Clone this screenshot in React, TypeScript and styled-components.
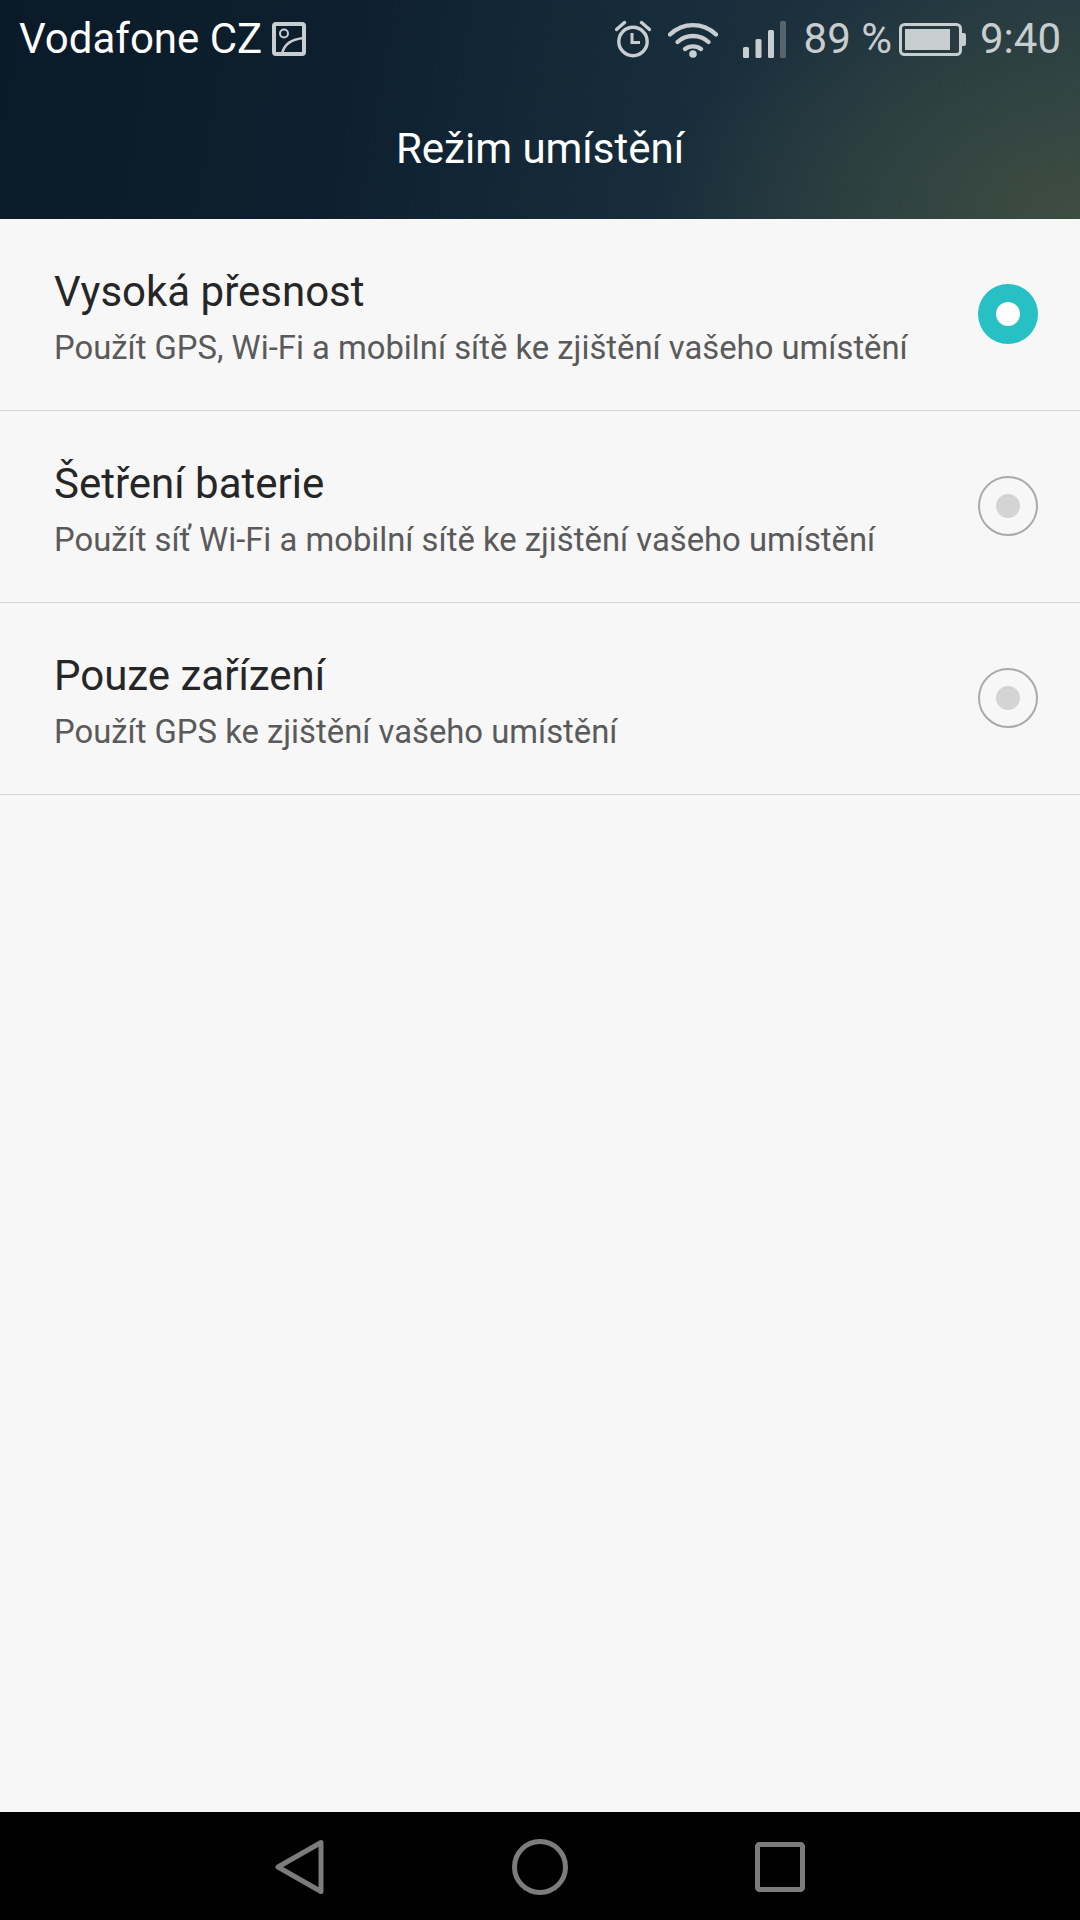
import styled, { createGlobalStyle } from 'styled-components';

const GlobalStyle = createGlobalStyle`
  html, body {
    margin: 0;
    padding: 0;
    background: #f7f7f7;
    font-family: Roboto, "Noto Sans", sans-serif;
  }
`;

const options = [
  { title: 'Vysoká přesnost', text: 'Použít GPS, Wi-Fi a mobilní sítě ke zjištění vašeho umístění', selected: true },
  { title: 'Šetření baterie', text: 'Použít síť Wi-Fi a mobilní sítě ke zjištění vašeho umístění', selected: false },
  { title: 'Pouze zařízení', text: 'Použít GPS ke zjištění vašeho umístění', selected: false },
];

const App = () => {
  return (
    <Screen>
      <GlobalStyle />
      <Header>
        <StatusBar>
          <Carrier>Vodafone CZ</Carrier>
          <PhotoIcon viewBox="0 0 34 34">
            <rect x="2" y="2" width="30" height="30" rx="2" fill="none" stroke="#c8cdd0" strokeWidth="4" />
            <circle cx="12" cy="11.5" r="4" fill="none" stroke="#c8cdd0" strokeWidth="2" />
            <path d="M10 32 C12 22 20 17 32 16" fill="none" stroke="#c8cdd0" strokeWidth="2.6" />
          </PhotoIcon>
          <StatusRight>
            <AlarmIcon viewBox="0 0 36 38">
              <circle cx="18" cy="21.5" r="14.2" fill="none" stroke="#c8cdd0" strokeWidth="3.4" />
              <path d="M17 13v9.5h8" fill="none" stroke="#c8cdd0" strokeWidth="3" />
              <path d="M1.5 9.5 L9.5 2.5 M34.5 9.5 L26.5 2.5" stroke="#c8cdd0" strokeWidth="3.4" strokeLinecap="round" />
            </AlarmIcon>
            <WifiIcon viewBox="0 0 50 37">
              <path d="M2 13.5 C15 1 35 1 48 13.5" fill="none" stroke="#c8cdd0" strokeWidth="4.4" strokeLinecap="round" />
              <path d="M9.5 21 C18 13 32 13 40.5 21" fill="none" stroke="#c8cdd0" strokeWidth="4.4" strokeLinecap="round" />
              <path d="M17 28 C21.5 24.5 28.5 24.5 33 28" fill="none" stroke="#c8cdd0" strokeWidth="4.4" strokeLinecap="round" />
              <circle cx="25" cy="33" r="3.8" fill="#c8cdd0" />
            </WifiIcon>
            <SignalIcon viewBox="0 0 43 37">
              <rect x="0" y="26" width="6" height="11" rx="1.5" fill="#c8cdd0" />
              <rect x="12.5" y="18" width="6" height="19" rx="1.5" fill="#c8cdd0" />
              <rect x="25" y="9" width="6" height="28" rx="1.5" fill="#c8cdd0" />
              <rect x="37" y="0" width="6" height="37" rx="1.5" fill="#56646c" />
            </SignalIcon>
            <Percent>89 %</Percent>
            <BatteryIcon viewBox="0 0 67 33">
              <rect x="1.5" y="1.5" width="60" height="30" rx="4" fill="none" stroke="#c8cdd0" strokeWidth="3" />
              <rect x="6" y="6" width="45" height="21" fill="#c8cdd0" />
              <path d="M63 10h2a2 2 0 0 1 2 2v9a2 2 0 0 1-2 2h-2z" fill="#c8cdd0" />
            </BatteryIcon>
            <Clock>9:40</Clock>
          </StatusRight>
        </StatusBar>
        <Title>Režim umístění</Title>
      </Header>
      <Options>
        {options.map((option) => (
          <Row key={option.title}>
            <RowText>
              <RowTitle>{option.title}</RowTitle>
              <RowDescription>{option.text}</RowDescription>
            </RowText>
            <Radio $selected={option.selected} />
          </Row>
        ))}
      </Options>
      <NavBar>
        <NavIcon viewBox="0 0 50 56" $width={50} $height={56}>
          <path d="M46 3.5 V52.5 L3 28 Z" fill="none" stroke="#7c7c7c" strokeWidth="5" strokeLinejoin="round" />
        </NavIcon>
        <NavIcon viewBox="0 0 56 56" $width={56} $height={56}>
          <circle cx="28" cy="28" r="25.5" fill="none" stroke="#7c7c7c" strokeWidth="5" />
        </NavIcon>
        <NavIcon viewBox="0 0 50 50" $width={50} $height={50}>
          <rect x="2.5" y="2.5" width="45" height="45" rx="2" fill="none" stroke="#7c7c7c" strokeWidth="5" />
        </NavIcon>
      </NavBar>
    </Screen>
  );
};

export default App;

const Screen = styled.div`
  width: 1080px;
  height: 1920px;
  display: flex;
  flex-direction: column;
  background: #f7f7f7;
  overflow: hidden;
`;

const Header = styled.header`
  height: 219px;
  flex-shrink: 0;
  box-sizing: border-box;
  background:
    radial-gradient(ellipse 420px 260px at 100% 100%, rgba(68, 82, 66, 0.8), rgba(68, 82, 66, 0) 100%),
    linear-gradient(100deg, #0b1a28 0%, #0d1f2e 30%, #182d3b 62%, #273c43 100%);
`;

const StatusBar = styled.div`
  height: 78px;
  display: flex;
  align-items: center;
  padding: 0 19px 0 19px;
`;

const Carrier = styled.span`
  color: #fff;
  font-size: 42px;
  line-height: 1;
`;

const PhotoIcon = styled.svg`
  width: 34px;
  height: 34px;
  margin-left: 10px;
`;

const StatusRight = styled.div`
  margin-left: auto;
  display: flex;
  align-items: center;
`;

const AlarmIcon = styled.svg`
  width: 36px;
  height: 38px;
`;

const WifiIcon = styled.svg`
  width: 50px;
  height: 37px;
  margin-left: 17px;
`;

const SignalIcon = styled.svg`
  width: 43px;
  height: 37px;
  margin-left: 25px;
`;

const Percent = styled.span`
  color: #c8cdd0;
  font-size: 42px;
  line-height: 1;
  margin-left: 18px;
`;

const BatteryIcon = styled.svg`
  width: 67px;
  height: 33px;
  margin-left: 7px;
`;

const Clock = styled.span`
  color: #c8cdd0;
  font-size: 42px;
  line-height: 1;
  margin-left: 14px;
`;

const Title = styled.h1`
  margin: 0;
  height: 141px;
  padding-top: 43px;
  box-sizing: border-box;
  text-align: center;
  color: #fff;
  font-size: 42px;
  font-weight: 400;
  line-height: 56px;
`;

const Options = styled.main`
  flex: 1;
`;

const Row = styled.div`
  height: 192px;
  box-sizing: border-box;
  display: flex;
  align-items: center;
  justify-content: space-between;
  padding: 0 42px 0 54px;
  border-bottom: 1px solid #d6d6d6;
`;

const RowText = styled.div`
  display: flex;
  flex-direction: column;
  margin-top: 6px;
`;

const RowTitle = styled.div`
  color: #262626;
  font-size: 42px;
  line-height: 54px;
  margin-bottom: 7px;
`;

const RowDescription = styled.div`
  color: #5a5a5a;
  font-size: 32.8px;
  line-height: 44px;
`;

const Radio = styled.div<{ $selected: boolean }>`
  width: 60px;
  height: 60px;
  margin-bottom: 1px;
  box-sizing: border-box;
  border-radius: 50%;
  display: flex;
  align-items: center;
  justify-content: center;
  background: ${(p) => (p.$selected ? '#26c0c5' : 'transparent')};
  border: ${(p) => (p.$selected ? 'none' : '2px solid #aaaaaa')};

  &::after {
    content: '';
    width: 24px;
    height: 24px;
    border-radius: 50%;
    background: ${(p) => (p.$selected ? '#fff' : '#d4d4d4')};
  }
`;

const NavBar = styled.nav`
  height: 108px;
  flex-shrink: 0;
  box-sizing: border-box;
  padding-top: 2px;
  background: #000;
  display: flex;
  align-items: center;
  justify-content: center;
  gap: 187px;
`;

const NavIcon = styled.svg<{ $width: number; $height: number }>`
  width: ${(p) => p.$width}px;
  height: ${(p) => p.$height}px;
`;
